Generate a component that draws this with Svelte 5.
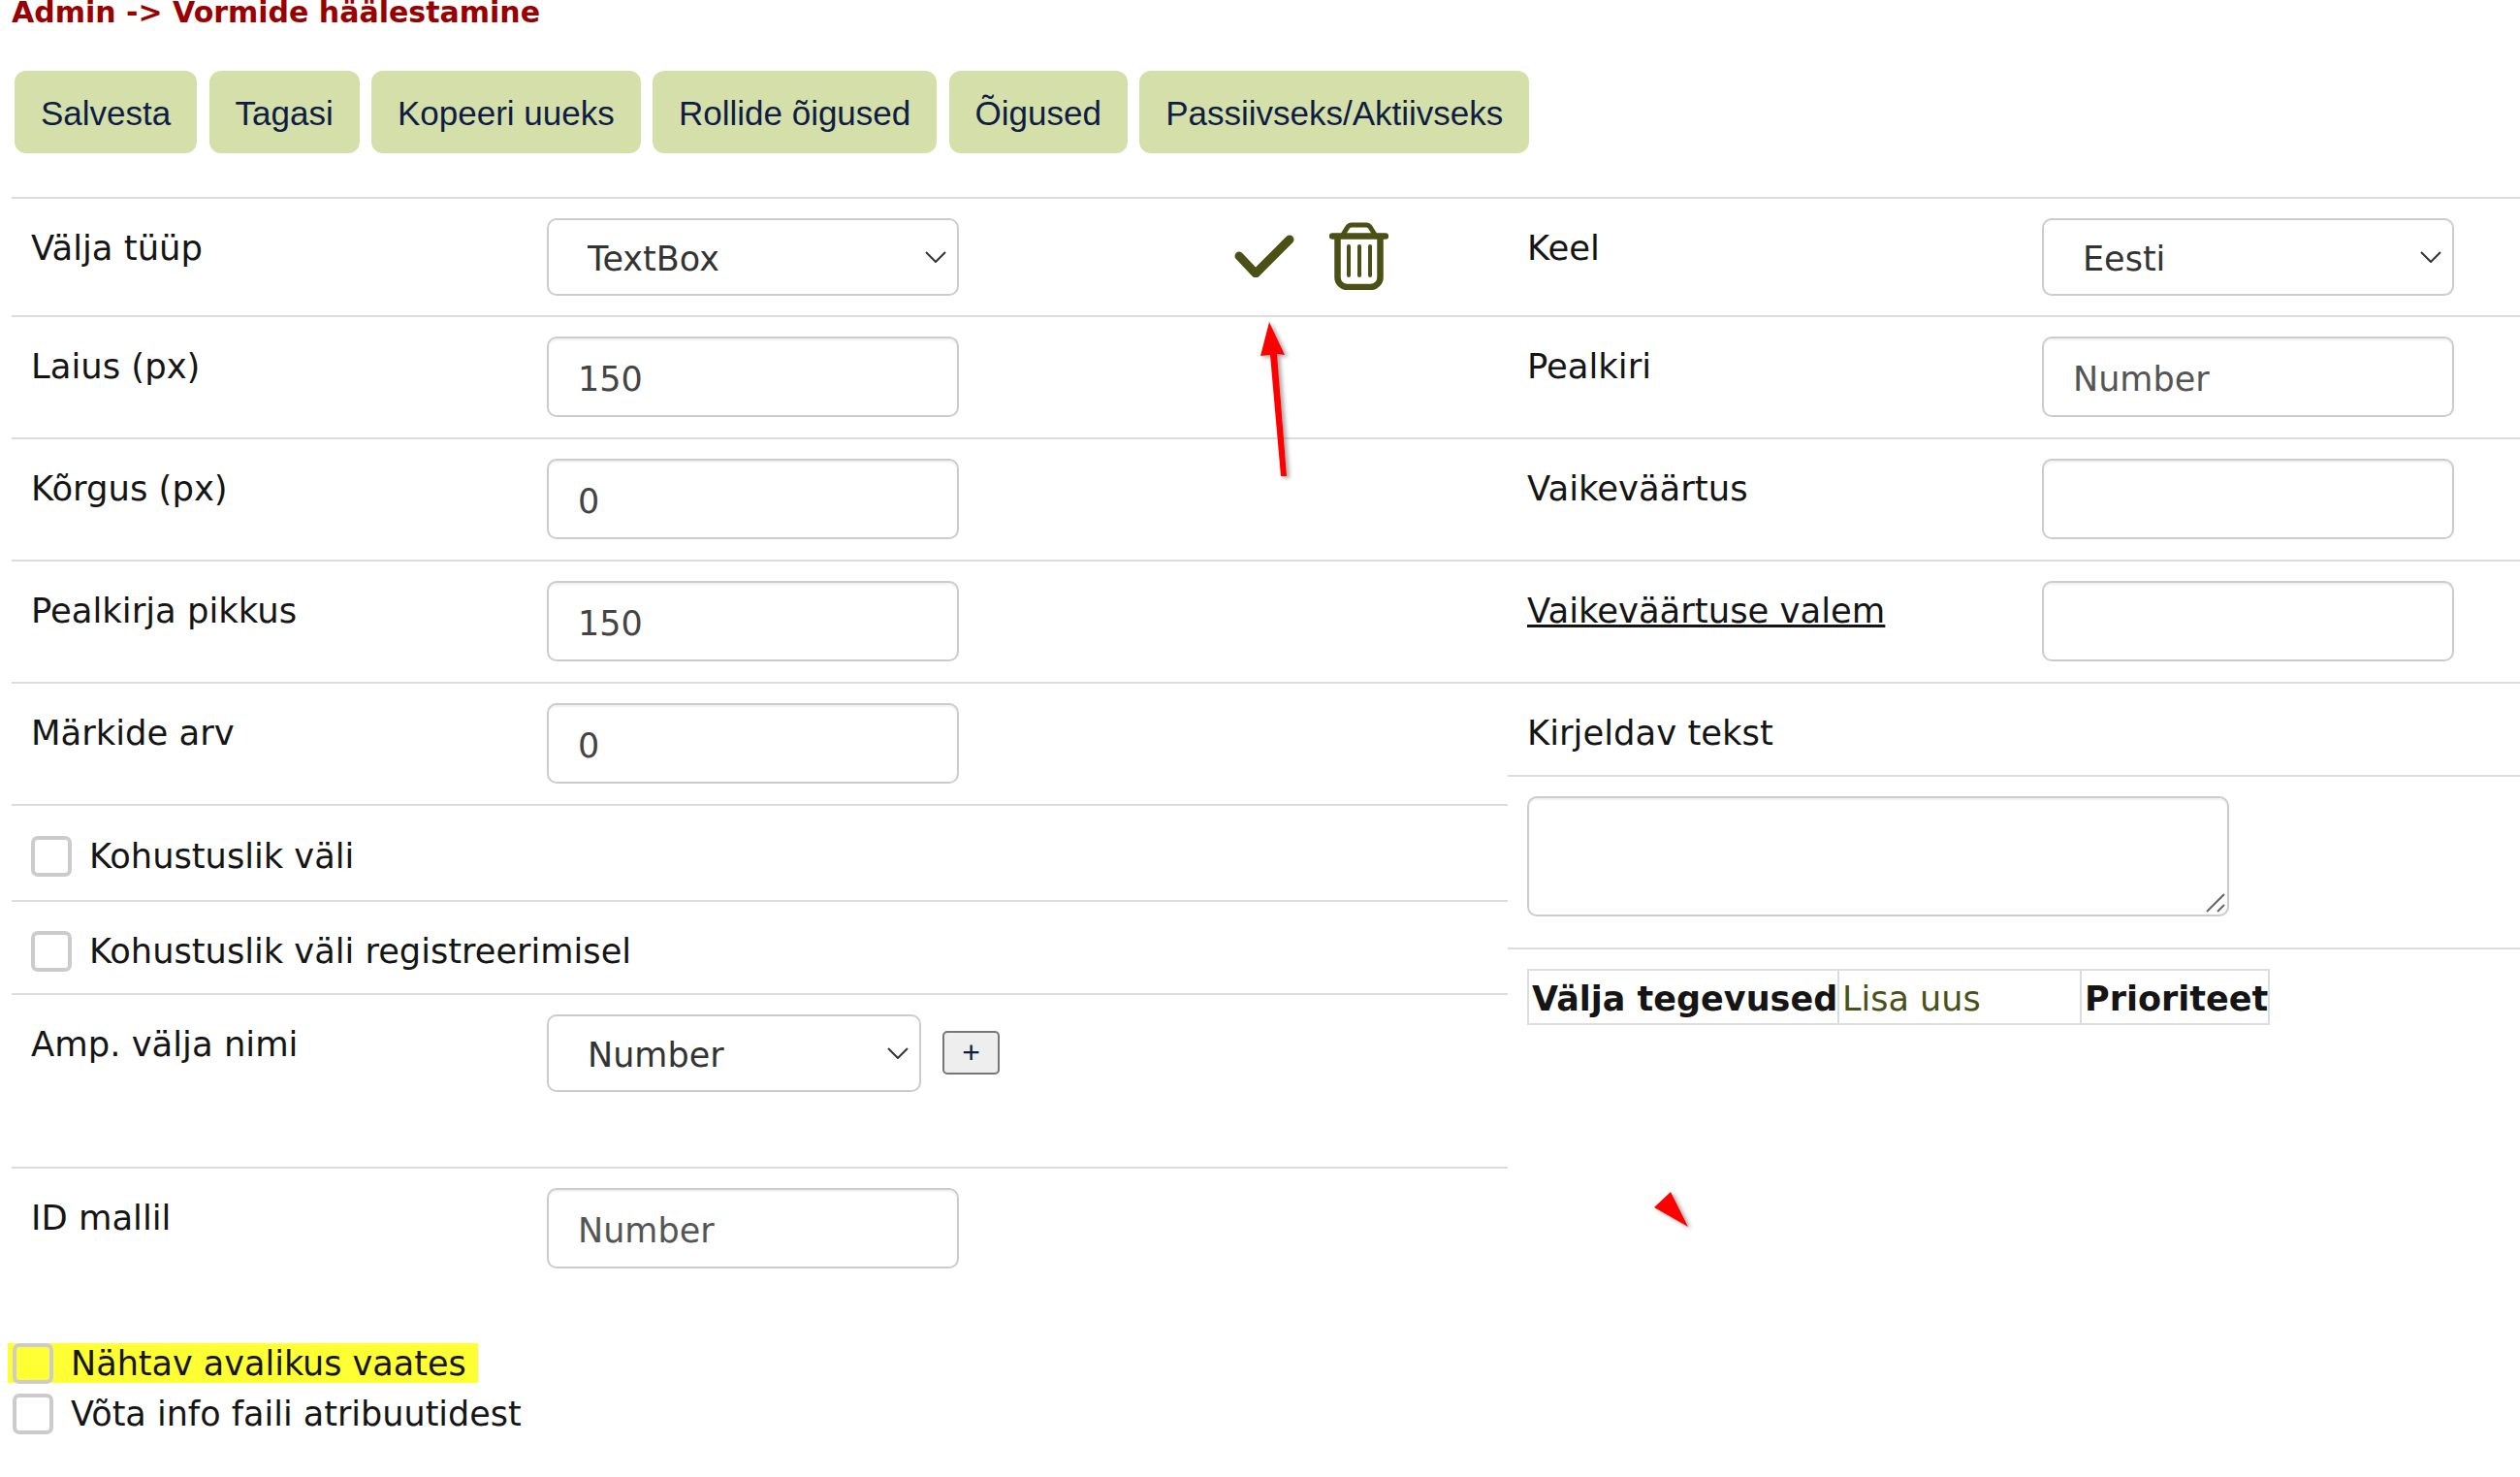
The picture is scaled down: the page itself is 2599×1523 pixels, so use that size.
<script>
  const buttons = ["Salvesta", "Tagasi", "Kopeeri uueks", "Rollide õigused", "Õigused", "Passiivseks/Aktiivseks"];
</script>

<div class="page">
  <h1>Admin -&gt; Vormide häälestamine</h1>

  <div class="toolbar">
    {#each buttons as b}
      <button class="btn">{b}</button>
    {/each}
  </div>

  <div class="columns">
    <div class="col left">
      <div class="row first">
        <span class="label">Välja tüüp</span>
        <div class="select-wrap">
          <select><option>TextBox</option></select>
          <svg class="chev" viewBox="0 0 22 12"><path d="M1 1l10 10L21 1" /></svg>
        </div>
        <div class="actions">
          <svg class="check" width="62" height="44" viewBox="0 0 62 44"><path d="M5 22l17 18L57 5" /></svg>
          <svg class="trash" width="61" height="70" viewBox="0 0 61 70">
            <path d="M3 14.5H58" />
            <path class="thin" d="M14 13l5-8q1.500-2 4-2H38q2.500 0 4 2l5 8" />
            <path d="M8.500 15V57a10 10 0 0 0 10 10H42.500a10 10 0 0 0 10-10V15" />
            <path class="bar" d="M20 25V55M31 25V55M42 25V55" />
          </svg>
        </div>
      </div>
      <div class="row"><span class="label">Laius (px)</span><input value="150" /></div>
      <div class="row"><span class="label">Kõrgus (px)</span><input value="0" /></div>
      <div class="row"><span class="label">Pealkirja pikkus</span><input value="150" /></div>
      <div class="row"><span class="label">Märkide arv</span><input value="0" /></div>
      <label class="row check-row tall"><input type="checkbox" /><span>Kohustuslik väli</span></label>
      <label class="row check-row"><input type="checkbox" /><span>Kohustuslik väli registreerimisel</span></label>
      <div class="row amp">
        <span class="label">Amp. välja nimi</span>
        <div class="select-wrap narrow">
          <select><option>Number</option></select>
          <svg class="chev" viewBox="0 0 22 12"><path d="M1 1l10 10L21 1" /></svg>
        </div>
        <button class="plus">+</button>
      </div>
      <div class="row"><span class="label">ID mallil</span><input placeholder="Number" /></div>
    </div>

    <div class="col right">
      <div class="row first">
        <span class="label">Keel</span>
        <div class="select-wrap">
          <select><option>Eesti</option></select>
          <svg class="chev" viewBox="0 0 22 12"><path d="M1 1l10 10L21 1" /></svg>
        </div>
      </div>
      <div class="row"><span class="label">Pealkiri</span><input placeholder="Number" /></div>
      <div class="row"><span class="label">Vaikeväärtus</span><input /></div>
      <div class="row"><span class="label link">Vaikeväärtuse valem</span><input /></div>
      <div class="row text-label"><span class="label">Kirjeldav tekst</span></div>
      <div class="row area-row">
        <div class="area-wrap">
          <textarea></textarea>
          <svg class="grip" width="22" height="22" viewBox="0 0 22 22"><path d="M2 20L20 2M13 20l7-7" /></svg>
        </div>
      </div>
      <div class="row table-row">
        <table>
          <tbody>
            <tr>
              <th class="c1">Välja tegevused</th>
              <td class="c2">Lisa uus</td>
              <th class="c3">Prioriteet</th>
            </tr>
          </tbody>
        </table>
      </div>
    </div>
  </div>

  <div class="bottom">
    <label class="plain yellow"><input type="checkbox" /><span>Nähtav avalikus vaates</span></label>
    <label class="plain"><input type="checkbox" /><span>Võta info faili atribuutidest</span></label>
  </div>

  <!-- annotations drawn on top of the screenshot -->
  <svg class="marks" width="2599" height="1523" viewBox="0 0 2599 1523">
    <defs>
      <filter id="sh" x="-30%" y="-30%" width="160%" height="160%">
        <feDropShadow dx="3" dy="2" stdDeviation="2" flood-color="#000" flood-opacity="0.35" />
      </filter>
    </defs>
    <polygon filter="url(#sh)" points="1309,332 1325,366 1317,365 1327,491 1321,491 1310,366 1300,367" />
    <polygon filter="url(#sh)" points="1723,1229 1706,1245 1741,1265" />
  </svg>
</div>

<style>
  :global(body) {
    margin: 0;
    background: #fff;
  }

  .page {
    position: relative;
    width: 100%;
    height: 1523px;
    overflow: hidden;
    font-family: "DejaVu Sans", Verdana, sans-serif;
    font-size: 35px;
    color: #151515;
    box-sizing: border-box;
  }

  h1 {
    margin: -7px 0 0 12px;
    height: 80px;
    font-size: 30px;
    line-height: 40px;
    font-weight: bold;
    color: #990000;
  }

  .toolbar {
    display: flex;
    gap: 12.25px;
    padding-left: 15px;
    height: 130px;
  }

  .btn {
    height: 85px;
    padding: 2px 27px 0;
    border: 0;
    border-radius: 12px;
    background: #d5dfa9;
    color: #0f1d45;
    font-family: "Liberation Sans", Arial, sans-serif;
    font-size: 35px;
  }

  .columns {
    display: flex;
    padding-left: 12px;
  }

  .col.left {
    width: 1543px;
    flex: none;
  }

  .col.right {
    flex: 1;
  }

  .row {
    display: flex;
    align-items: flex-start;
    border-top: 2px solid #dcdcdc;
    padding: 20px 0 21px;
  }

  .row.first {
    padding-bottom: 20px;
  }

  .left .row {
    padding-left: 20px;
  }

  .right .row {
    padding-left: 20px;
  }

  .label {
    width: 532px;
    flex: none;
    font-size: 35.4px;
    line-height: 42px;
    padding-top: 10px;
  }

  .right .label {
    width: 531px;
  }

  .link {
    text-decoration: underline;
  }

  input:not([type]),
  select {
    box-sizing: border-box;
    width: 425px;
    height: 83px;
    padding: 4px 30px 0;
    border: 2px solid #cccccc;
    border-radius: 10px;
    background: #fff;
    font: inherit;
    color: #444;
    box-shadow: inset 0 2px 2px rgba(0, 0, 0, 0.06);
  }

  input::placeholder {
    color: #555;
    opacity: 1;
  }

  .select-wrap {
    position: relative;
    width: 425px;
    flex: none;
  }

  .select-wrap.narrow {
    width: 386px;
  }

  select {
    appearance: none;
    display: block;
    width: 100%;
    height: 80px;
    padding-left: 40px;
    color: #333;
    box-shadow: none;
  }

  .chev {
    position: absolute;
    right: 13px;
    top: 34px;
    width: 22px;
    height: 12px;
    fill: none;
    stroke: #333;
    stroke-width: 2;
  }

  .actions {
    display: flex;
    align-items: center;
    gap: 36px;
    margin: 4px 0 0 284px;
  }

  .check path {
    fill: none;
    stroke: #4a5016;
    stroke-width: 9;
    stroke-linecap: round;
    stroke-linejoin: round;
  }

  .trash path {
    fill: none;
    stroke: #4a5016;
    stroke-width: 6.5;
    stroke-linecap: round;
  }

  .trash .thin {
    stroke-width: 5;
  }

  .trash .bar {
    stroke-width: 4;
  }

  .check-row {
    align-items: center;
    padding-top: 30px;
    padding-bottom: 23px;
    height: 41px;
  }

  .check-row.tall {
    padding-top: 31px;
    padding-bottom: 25px;
  }

  .check-row span {
    font-size: 35.2px;
  }

  input[type="checkbox"] {
    appearance: none;
    box-sizing: border-box;
    width: 42px;
    height: 42px;
    margin: 0 18px 0 0;
    flex: none;
    border: 4px solid #cccccc;
    border-radius: 7px;
    background: transparent;
  }

  .amp {
    padding-bottom: 77px;
  }

  .plus {
    box-sizing: border-box;
    width: 59px;
    height: 45px;
    margin: 17px 0 0 22px;
    padding: 0;
    border: 2px solid #777;
    border-radius: 5px;
    background: #eeeeee;
    color: #0f1d45;
    font-family: "Liberation Sans", Arial, sans-serif;
    font-size: 32px;
  }

  .text-label {
    height: 53px;
  }

  .area-row {
    padding-bottom: 32px;
  }

  .area-wrap {
    position: relative;
    width: 724px;
    height: 124px;
  }

  textarea {
    display: block;
    box-sizing: border-box;
    width: 100%;
    height: 100%;
    border: 2px solid #cccccc;
    border-radius: 10px;
    resize: none;
    box-shadow: inset 0 2px 2px rgba(0, 0, 0, 0.06);
  }

  .grip {
    position: absolute;
    right: 3px;
    bottom: 3px;
    fill: none;
    stroke: #666;
    stroke-width: 2;
  }

  table {
    border-collapse: collapse;
    table-layout: fixed;
    width: 766px;
    height: 57px;
  }

  th,
  td {
    border: 2px solid #dddddd;
    padding: 4px 3px 0;
    text-align: left;
    white-space: nowrap;
    line-height: 50px;
  }

  .c1 {
    width: 312px;
  }

  .c2 {
    width: 242px;
    color: #4a5016;
  }

  .bottom {
    position: absolute;
    left: 13px;
    top: 1385px;
    display: flex;
    flex-direction: column;
    gap: 11px;
  }

  .plain {
    display: flex;
    align-items: center;
    height: 42px;
    width: fit-content;
  }

  .yellow {
    background: #ffff33;
    margin-left: -5px;
    padding-left: 5px;
    padding-right: 12px;
    height: 41px;
  }

  .plain input[type="checkbox"] {
    margin-right: 18px;
  }

  .marks {
    position: absolute;
    left: 0;
    top: 0;
    pointer-events: none;
    fill: #ff0000;
  }
</style>
